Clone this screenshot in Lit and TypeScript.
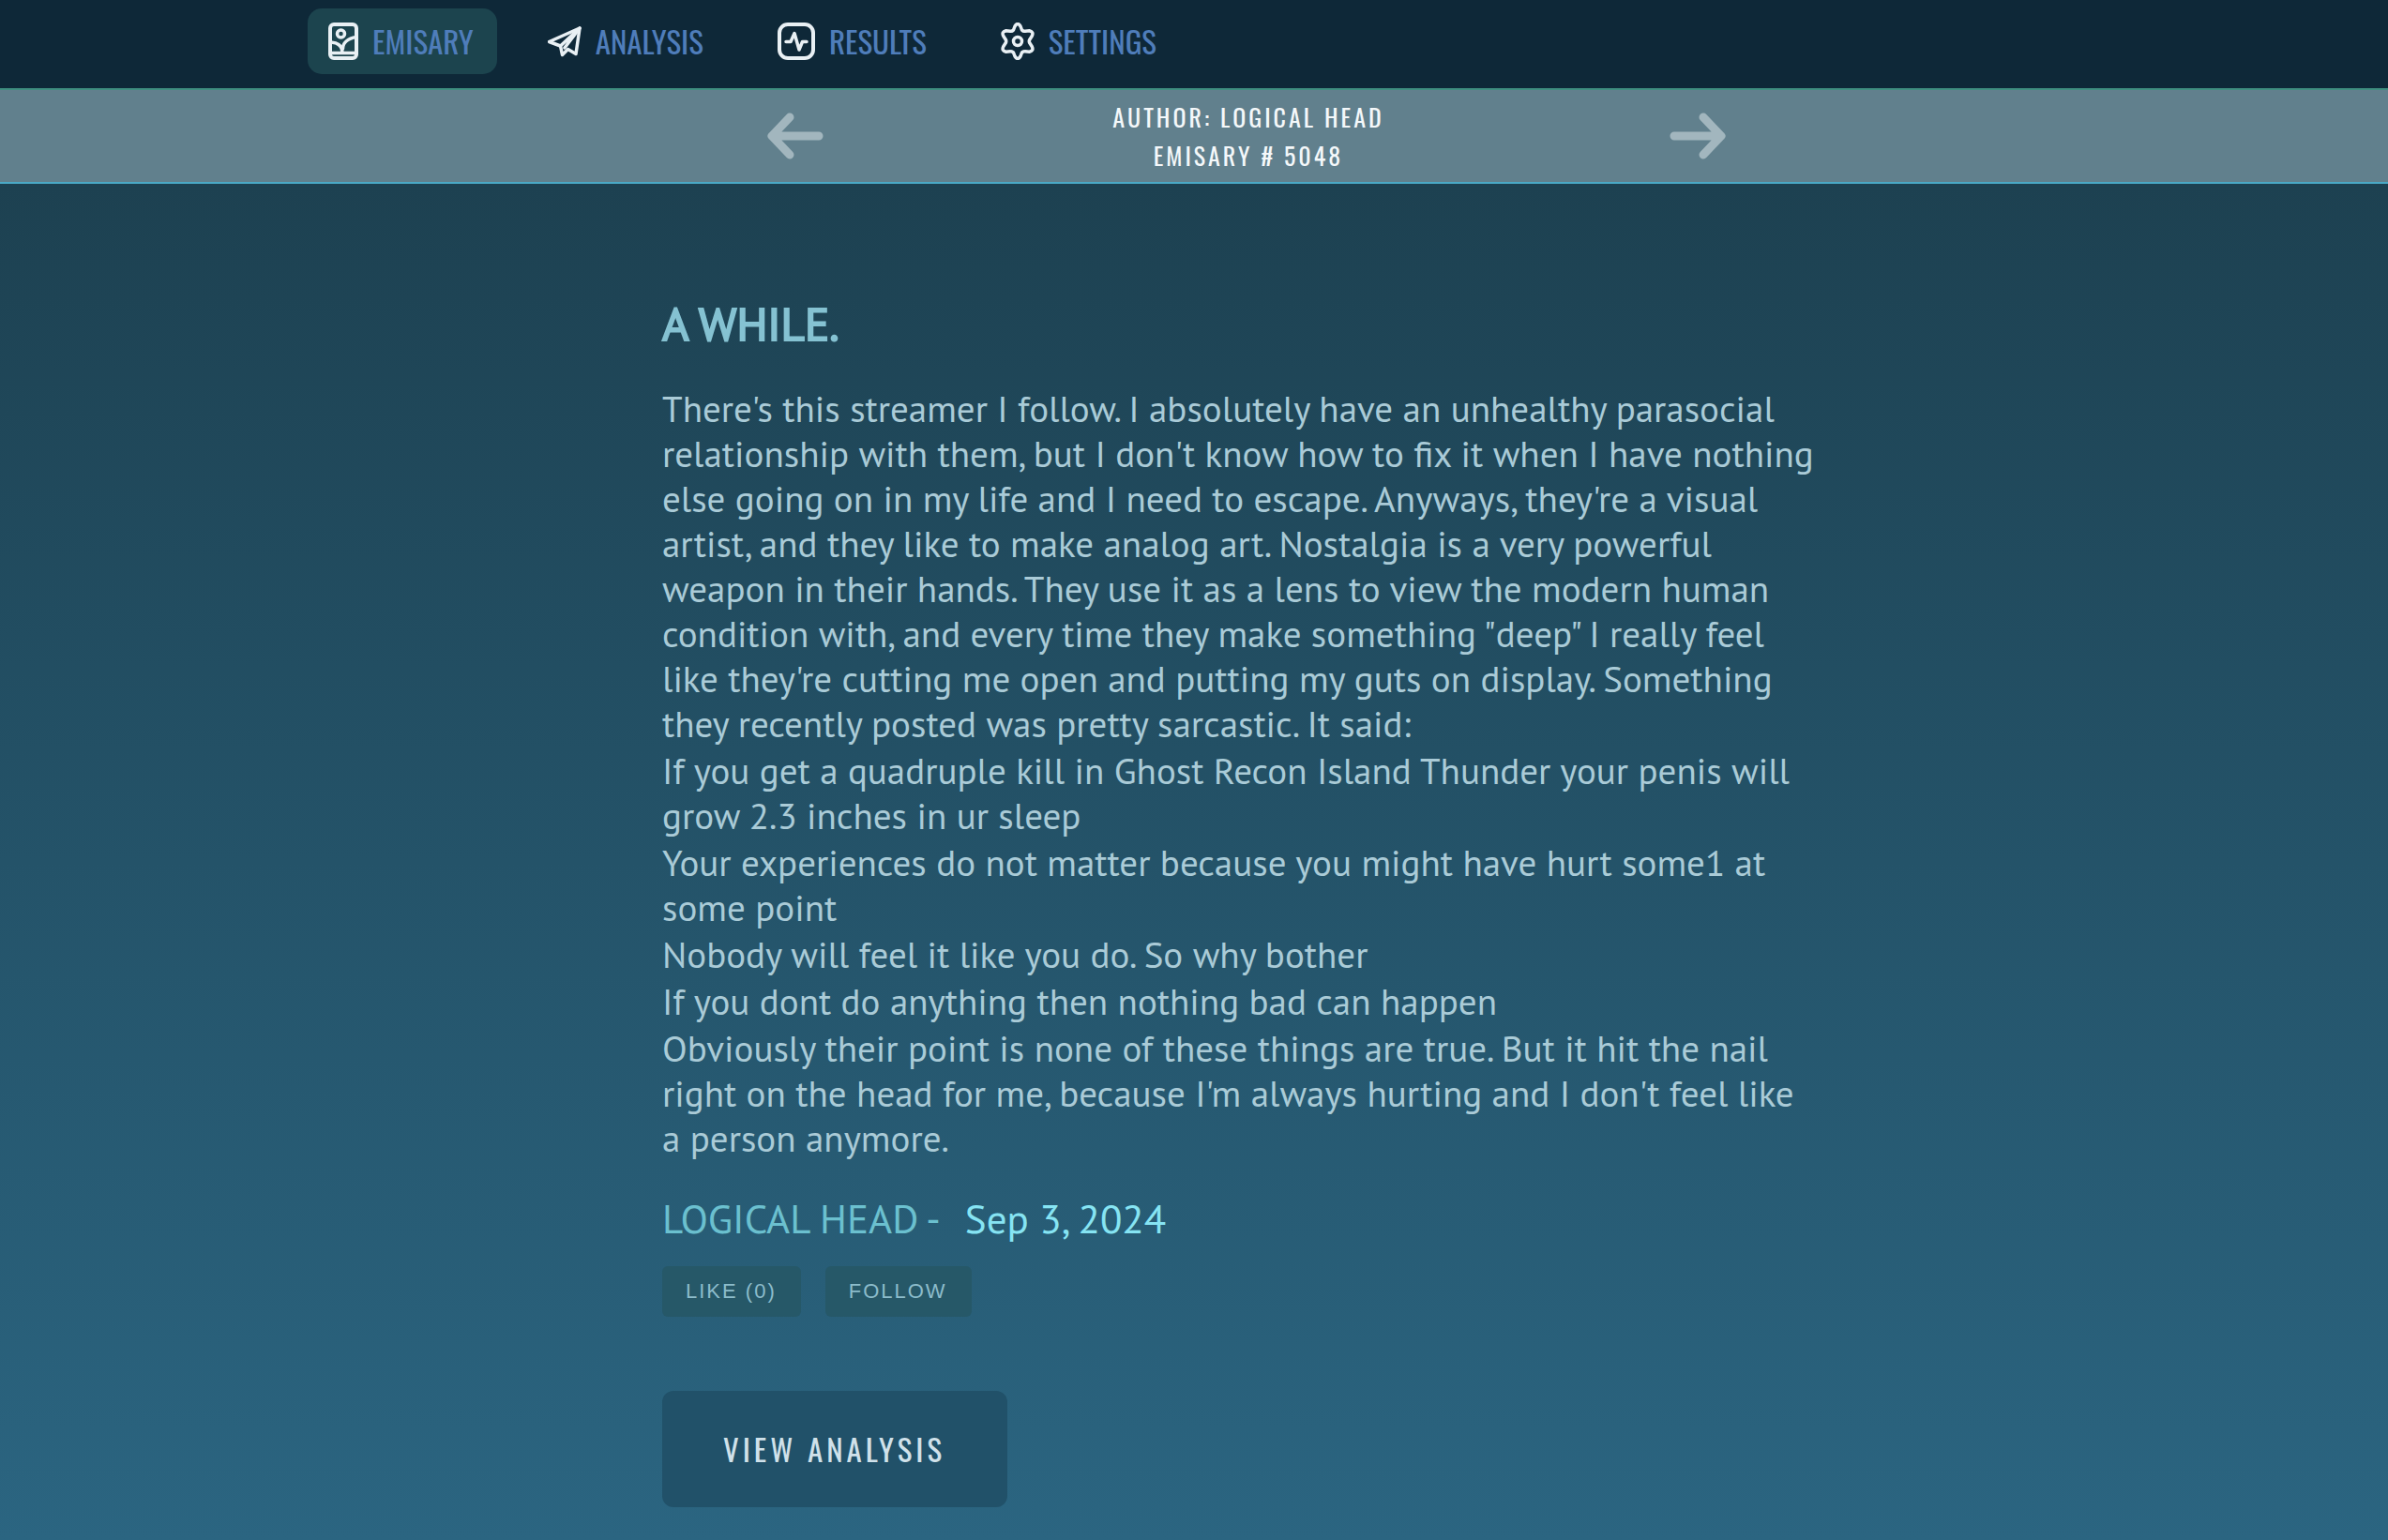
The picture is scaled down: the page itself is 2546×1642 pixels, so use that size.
import { LitElement, html, css, svg } from "lit";
import { customElement, property, state } from "lit/decorators.js";

const icons = {
  picture: {
    width: 32,
    shape: svg`
      <rect x="2" y="2" width="28" height="36" rx="4" stroke-width="4"></rect>
      <circle cx="13.500" cy="12" r="4"></circle>
      <path d="M2 21.500c7-1 12.500 3 13 10M15.500 28c0-6 5-11 14.500-12.500M3 32.500h26"></path>`,
  },
  plane: {
    width: 36,
    shape: svg`
      <path d="M1.500 20.500L34 6 30 33.500 21.500 28.500 15.500 34.500 13.500 25Z"></path>
      <path d="M34 6L13.500 25M34 6L18 27"></path>`,
  },
  pulse: {
    width: 40,
    shape: svg`
      <rect x="2" y="2" width="36" height="36" rx="9" stroke-width="4"></rect>
      <path d="M9 20.500h5l4-9 5 17.500 3.500-8.500H31"></path>`,
  },
  gear: {
    width: 36,
    shape: svg`
      <path d="M15 4Q18-1 21 4L22.500 8Q24.200 9.800 26 9.200L30.500 8.800Q35.500 10 33.200 14.500L30.600 18.500Q30 20 30.600 21.500L33.200 25.500Q35.500 30 30.500 31.200L26 30.800Q24.200 30.200 22.500 32L21 36Q18 41 15 36L13.500 32Q11.800 30.200 10 30.800L5.500 31.200Q.5 30 2.800 25.500L5.400 21.500Q6 20 5.400 18.500L2.800 14.500Q.5 10 5.500 8.800L10 9.200Q11.800 9.800 13.500 8Z"></path>
      <circle cx="18" cy="20" r="4.500"></circle>`,
  },
};

type IconName = keyof typeof icons;

@customElement("nav-item")
export class NavItem extends LitElement {
  @property() icon: IconName = "picture";
  @property() label = "";
  @property() href = "#";
  @property({ type: Boolean }) current = false;

  static styles = css`
    :host { display: block; }
    .link {
      display: flex;
      align-items: center;
      gap: 15px;
      height: 70px;
      box-sizing: border-box;
      padding: 0 25px 0 22px;
      border-radius: 15px;
      color: #4f7dba;
      font: 400 33px/40px Oswald, "Roboto Condensed", sans-serif;
      text-decoration: none;
    }
    .link.current { background: #1c444e; }
    .icon {
      height: 40px;
      fill: none;
      stroke: #e9f0f4;
      stroke-width: 3.5;
      stroke-linejoin: round;
      stroke-linecap: round;
    }
  `;

  render() {
    const { width, shape } = icons[this.icon];
    return html`
      <a class="link ${this.current ? "current" : ""}" href=${this.href}
        aria-current=${this.current ? "page" : "false"}>
        <svg class="icon" width=${width} viewBox="0 0 ${width} 40" aria-hidden="true">${shape}</svg>
        <span>${this.label}</span>
      </a>`;
  }
}

@customElement("app-root")
export class AppRoot extends LitElement {
  @state() private likes = 0;

  private readonly paragraphs: string[][] = [
    [
      "There's this streamer I follow. I absolutely have an unhealthy parasocial",
      "relationship with them, but I don't know how to fix it when I have nothing",
      "else going on in my life and I need to escape. Anyways, they're a visual",
      "artist, and they like to make analog art. Nostalgia is a very powerful",
      "weapon in their hands. They use it as a lens to view the modern human",
      "condition with, and every time they make something \"deep\" I really feel",
      "like they're cutting me open and putting my guts on display. Something",
      "they recently posted was pretty sarcastic. It said:",
    ],
    ["If you get a quadruple kill in Ghost Recon Island Thunder your penis will", "grow 2.3 inches in ur sleep"],
    ["Your experiences do not matter because you might have hurt some1 at", "some point"],
    ["Nobody will feel it like you do. So why bother"],
    ["If you dont do anything then nothing bad can happen"],
    [
      "Obviously their point is none of these things are true. But it hit the nail",
      "right on the head for me, because I'm always hurting and I don't feel like",
      "a person anymore.",
    ],
  ];

  static styles = css`
    :host {
      display: flex;
      flex-direction: column;
      min-height: 100vh;
      background: linear-gradient(#1d4151 196px, #2b6581 100%);
      color: #aacbd7;
      font-family: "PT Sans", "Noto Sans", sans-serif;
    }
    .nav {
      display: flex;
      gap: 32px;
      padding: 9px 328px 15px;
      background: #0e2838;
      border-bottom: 2px solid #3f8e80;
    }
    .pager {
      display: grid;
      grid-template-columns: 60px auto 60px;
      justify-content: space-between;
      align-items: center;
      padding: 8px 706px 8px 818px;
      background: #61808d;
      border-bottom: 2px solid #4aa9c6;
    }
    .pager-info {
      padding-left: 4px;
      text-align: center;
      color: #f4f8fa;
      font: 400 26px/41px Oswald, "Roboto Condensed", sans-serif;
      letter-spacing: 3px;
    }
    .pager-info p { margin: 0; }
    .arrow {
      display: flex;
      padding: 0;
      border: 0;
      background: none;
    }
    .arrow svg {
      width: 60px;
      height: 50px;
      fill: none;
      stroke: #a2b6be;
      stroke-width: 9;
      stroke-linecap: round;
      stroke-linejoin: round;
    }
    .post {
      display: flex;
      flex-direction: column;
      align-items: flex-start;
      padding: 114px 592px 32px 706px;
    }
    .title {
      margin: 0 0 32px;
      color: #85c2d2;
      font-size: 49px;
      font-weight: 400;
      line-height: 70px;
      -webkit-text-stroke: 2px #85c2d2;
    }
    .body {
      display: flex;
      flex-direction: column;
      gap: 2px;
      font-size: 39px;
      line-height: 48px;
    }
    .body p { margin: 0; }
    .byline {
      display: flex;
      gap: 26px;
      margin: 33px 0 23px;
      font-size: 43px;
      line-height: 56px;
    }
    .byline a { color: #6bc0cf; text-decoration: none; }
    .byline time { color: #86e4f3; }
    .actions { display: flex; gap: 26px; }
    .small {
      height: 54px;
      padding: 0 26px 0 25px;
      border: 0;
      border-radius: 6px;
      background: #265868;
      color: #8cbccb;
      font: 22px/54px "Liberation Sans", sans-serif;
      letter-spacing: 2px;
    }
    .view {
      margin-top: 79px;
      padding: 0 66px 0 65px;
      border-radius: 12px;
      background: #215169;
      color: #d0e1ea;
      font: 400 33px/124px Oswald, "Roboto Condensed", sans-serif;
      letter-spacing: 4px;
      text-decoration: none;
    }
  `;

  render() {
    return html`
      <nav class="nav" aria-label="Main">
        <nav-item icon="picture" label="EMISARY" href="#emisary" current></nav-item>
        <nav-item icon="plane" label="ANALYSIS" href="#analysis"></nav-item>
        <nav-item icon="pulse" label="RESULTS" href="#results"></nav-item>
        <nav-item icon="gear" label="SETTINGS" href="#settings"></nav-item>
      </nav>
      <header class="pager">
        <button class="arrow" aria-label="Previous emisary">
          <svg viewBox="0 0 60 50"><path d="M24 5L5 25l19 20M5 25h50"></path></svg>
        </button>
        <div class="pager-info">
          <p>AUTHOR: LOGICAL HEAD</p>
          <p>EMISARY # 5048</p>
        </div>
        <button class="arrow" aria-label="Next emisary">
          <svg viewBox="0 0 60 50"><path d="M36 5l19 20-19 20M55 25H5"></path></svg>
        </button>
      </header>
      <main class="post">
        <h1 class="title">A WHILE.</h1>
        <div class="body">
          ${this.paragraphs.map(
            (lines) => html`<p>${lines.map((line, i) => html`${i ? html`<br />` : ""}${line}`)}</p>`
          )}
        </div>
        <div class="byline">
          <a href="#author">LOGICAL HEAD -</a>
          <time datetime="2024-09-03">Sep 3, 2024</time>
        </div>
        <div class="actions">
          <button class="small" @click=${() => this.likes++}>LIKE (${this.likes})</button>
          <button class="small">FOLLOW</button>
        </div>
        <a class="view" href="#analysis">VIEW ANALYSIS</a>
      </main>`;
  }
}
